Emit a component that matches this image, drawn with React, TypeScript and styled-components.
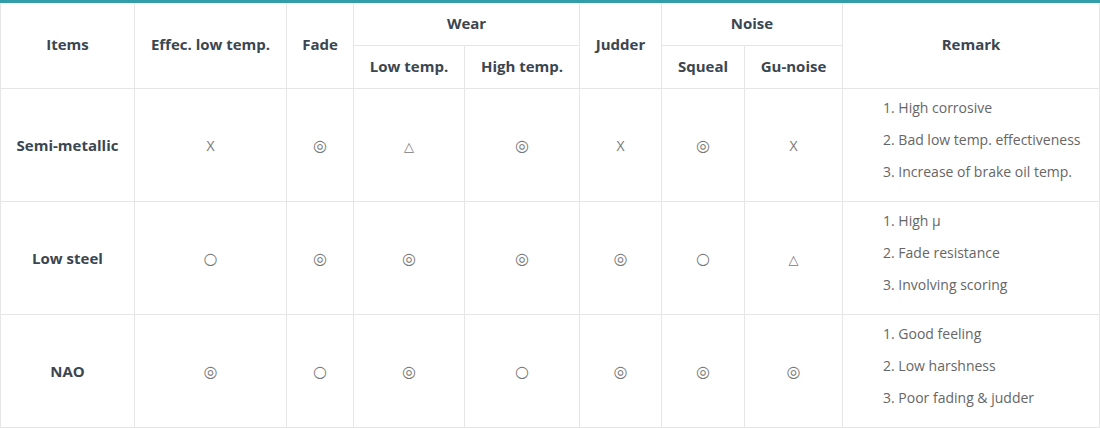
import React from "react";
import styled, { createGlobalStyle } from "styled-components";

const Global = createGlobalStyle`
  html, body { margin: 0; padding: 0; background: #fff; }
  body { font-family: "Open Sans", "Noto Sans", sans-serif; }
`;

const Table = styled.table`
  width: 1099px;
  border-collapse: collapse;
  table-layout: fixed;
  border-top: 3px solid #339ea9;
`;

const Th = styled.th<{ h?: number }>`
  border: 1px solid #e6e6e6;
  border-top: none;
  font-weight: 700;
  font-size: 15px;
  color: #3b4650;
  text-align: center;
  vertical-align: middle;
  padding: 0 0 3px;
  height: ${(p) => p.h ?? 44}px;
  box-sizing: border-box;
`;

const Td = styled.td`
  border: 1px solid #e6e6e6;
  font-size: 14px;
  color: #666;
  text-align: center;
  vertical-align: middle;
  padding: 0;
  height: 113px;
  box-sizing: border-box;
`;

const RowHead = styled(Td)`
  font-weight: 700;
  font-size: 15px;
  color: #3b4650;
`;

const Symbol = styled.span<{ $small?: boolean }>`
  font-family: "DejaVu Sans", sans-serif;
  font-size: ${(p) => (p.$small ? 13 : 16)}px;
  color: #777;
`;

const Letter = styled.span`
  font-size: 14px;
  color: #777;
`;

const RemarkCell = styled(Td)`
  text-align: left;
  padding: 0 0 10px 40px;
`;

const RemarkList = styled.div`
  display: flex;
  flex-direction: column;
  line-height: 32px;
  color: #666;
  font-size: 14px;
`;

const widths = [134, 152, 67, 111, 115, 82, 83, 98, 257];

type Row = { name: string; marks: string[]; remarks: string[] };

const rows: Row[] = [
  {
    name: "Semi-metallic",
    marks: ["X", "◎", "△", "◎", "X", "◎", "X"],
    remarks: ["1. High corrosive", "2. Bad low temp. effectiveness", "3. Increase of brake oil temp."],
  },
  {
    name: "Low steel",
    marks: ["○", "◎", "◎", "◎", "◎", "○", "△"],
    remarks: ["1. High μ", "2. Fade resistance", "3. Involving scoring"],
  },
  {
    name: "NAO",
    marks: ["◎", "○", "◎", "○", "◎", "◎", "◎"],
    remarks: ["1. Good feeling", "2. Low harshness", "3. Poor fading & judder"],
  },
];

const Mark = ({ m }: { m: string }) =>
  m === "X" ? <Letter>X</Letter> : <Symbol $small={m === "△"}>{m}</Symbol>;

export default function App() {
  return (
    <>
      <Global />
      <Table>
        <colgroup>
          {widths.map((w, i) => (
            <col key={i} style={{ width: w }} />
          ))}
        </colgroup>
        <thead>
          <tr>
            <Th rowSpan={2}>Items</Th>
            <Th rowSpan={2}>Effec. low temp.</Th>
            <Th rowSpan={2}>Fade</Th>
            <Th colSpan={2}>Wear</Th>
            <Th rowSpan={2}>Judder</Th>
            <Th colSpan={2}>Noise</Th>
            <Th rowSpan={2}>Remark</Th>
          </tr>
          <tr>
            <Th h={43}>Low temp.</Th>
            <Th h={43}>High temp.</Th>
            <Th h={43}>Squeal</Th>
            <Th h={43}>Gu-noise</Th>
          </tr>
        </thead>
        <tbody>
          {rows.map((r) => (
            <tr key={r.name}>
              <RowHead>{r.name}</RowHead>
              {r.marks.map((m, i) => (
                <Td key={i}>
                  <Mark m={m} />
                </Td>
              ))}
              <RemarkCell>
                <RemarkList>
                  {r.remarks.map((t) => (
                    <span key={t}>{t}</span>
                  ))}
                </RemarkList>
              </RemarkCell>
            </tr>
          ))}
        </tbody>
      </Table>
    </>
  );
}
